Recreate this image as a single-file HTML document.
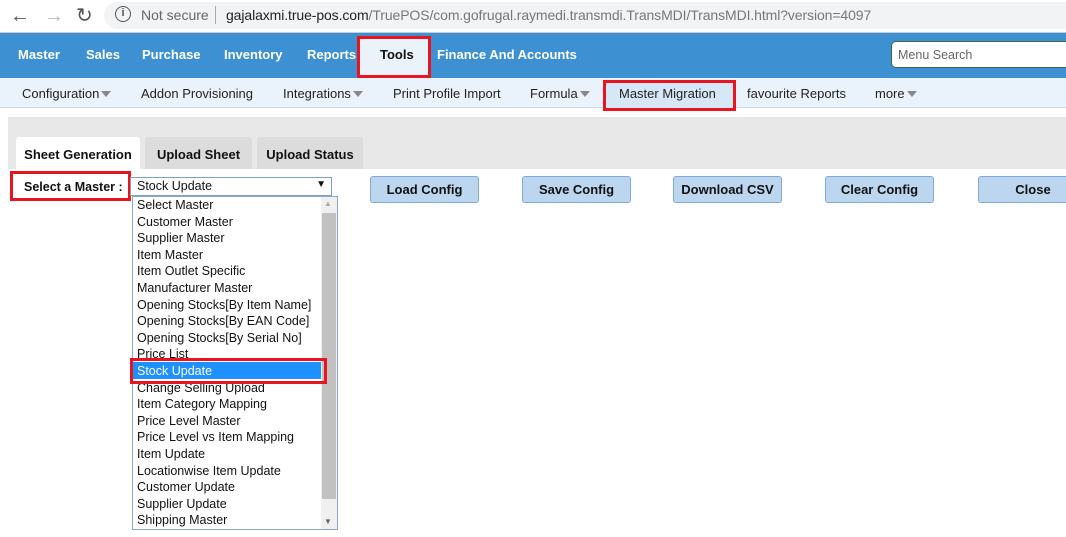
<!DOCTYPE html>
<html><head><style>
*{margin:0;padding:0;box-sizing:border-box}
body{width:1066px;height:537px;overflow:hidden;background:#fff;font-family:"Liberation Sans",Arial,sans-serif;position:relative}
.a{position:absolute}
.nav span{position:absolute;top:47px;color:#fff;font-weight:bold;font-size:13px}
.sub span{position:absolute;top:86px;color:#222;font-size:13px}
.tri{display:inline-block;width:0;height:0;border-left:5px solid transparent;border-right:5px solid transparent;border-top:6px solid #888;margin-left:2px;vertical-align:1px}
.btn{position:absolute;top:176px;height:27px;background:#bcd6ef;border:1px solid #7eaad8;border-radius:3px;font-weight:bold;font-size:13px;color:#111;text-align:center;line-height:25px}
.tab{position:absolute;top:137px;height:32px;font-weight:bold;font-size:13px;color:#111;text-align:center;line-height:36px;border-radius:3px 3px 0 0}
.li{position:absolute;left:137px;font-size:12.5px;color:#111;line-height:16px}
</style></head><body>
<div class="a" style="left:0;top:0;width:1066px;height:33px;background:#fff"></div>
<div class="a" style="left:10px;top:5px;font-size:20px;color:#555">&#8592;</div>
<div class="a" style="left:44px;top:5px;font-size:20px;color:#bbb">&#8594;</div>
<div class="a" style="left:76px;top:3px;font-size:20px;color:#555">&#8635;</div>
<div class="a" style="left:104px;top:2px;width:980px;height:27px;border-radius:14px;background:#f1f3f4"></div>
<div class="a" style="left:115px;top:6px;width:16px;height:16px;border:1.5px solid #555;border-radius:50%;font-size:11px;text-align:center;line-height:13px;color:#555;font-weight:bold">i</div>
<div class="a" style="left:141px;top:7px;font-size:14px;color:#666">Not secure</div>
<div class="a" style="left:215px;top:6px;width:1px;height:18px;background:#aaa"></div>
<div class="a" style="left:226px;top:7px;font-size:14px;color:#222;letter-spacing:-0.1px">gajalaxmi.true-pos.com<span style="color:#777">/TruePOS/com.gofrugal.raymedi.transmdi.TransMDI/TransMDI.html?version=4097</span></div>
<div class="a" style="left:0;top:32px;width:1066px;height:1px;background:#ccc"></div>
<div class="a" style="left:0;top:33px;width:1066px;height:45px;background:#3d91d2"></div>
<div class="a" style="left:357px;top:36px;width:74px;height:42px;background:#eaf2fa;border:3px solid #e8141f"></div>
<div class="nav">
<span style="left:18px">Master</span><span style="left:86px">Sales</span><span style="left:142px">Purchase</span><span style="left:224px">Inventory</span><span style="left:307px">Reports</span><span style="left:380px;color:#111">Tools</span><span style="left:437px">Finance And Accounts</span>
</div>
<div class="a" style="left:891px;top:41px;width:190px;height:27px;background:#fff;border:1px solid #3a6a3a;border-radius:5px;font-size:12.5px;color:#666;padding:6px 0 0 6px">Menu Search</div>
<div class="a" style="left:0;top:78px;width:1066px;height:30px;background:#eaf3fb;border-bottom:1px solid #c8dbe8"></div>
<div class="a" style="left:603px;top:80px;width:133px;height:31px;background:#d6e8f7;border:3px solid #e8141f"></div>
<div class="sub">
<span style="left:22px">Configuration<i class="tri"></i></span><span style="left:141px">Addon Provisioning</span><span style="left:283px">Integrations<i class="tri"></i></span><span style="left:393px">Print Profile Import</span><span style="left:530px">Formula<i class="tri"></i></span><span style="left:619px">Master Migration</span><span style="left:747px">favourite Reports</span><span style="left:875px">more<i class="tri"></i></span>
</div>
<div class="a" style="left:8px;top:117px;width:1058px;height:52px;background:#e8e8e8"></div>
<div class="tab" style="left:16px;width:124px;background:#fff">Sheet Generation</div>
<div class="tab" style="left:145px;width:107px;background:#dcdcdc">Upload Sheet</div>
<div class="tab" style="left:257px;width:106px;background:#dcdcdc">Upload Status</div>
<div class="a" style="left:10px;top:171px;width:121px;height:30px;border:3px solid #e8141f;font-weight:bold;font-size:12.5px;color:#111;padding:6px 0 0 11px">Select a Master :</div>
<div class="a" style="left:130px;top:177px;width:202px;height:19px;border:1px solid #7ea1c8;font-size:12.5px;padding:1px 0 0 6px;color:#111">Stock Update<span style="position:absolute;right:5px;top:1px;font-size:10px">&#9660;</span></div>
<div class="btn" style="left:370px;width:109px">Load Config</div>
<div class="btn" style="left:522px;width:109px">Save Config</div>
<div class="btn" style="left:673px;width:109px">Download CSV</div>
<div class="btn" style="left:825px;width:109px">Clear Config</div>
<div class="btn" style="left:978px;width:110px">Close</div>
<div class="a" style="left:132px;top:196px;width:206px;height:334px;border:1px solid #8aa8cc;background:#fff"></div>
<div class="a" style="left:321px;top:197px;width:16px;height:332px;background:#f0f0f0"></div>
<div class="a" style="left:322px;top:213px;width:14px;height:286px;background:#c1c1c1"></div>
<div class="a" style="left:324px;top:199px;font-size:8px;color:#aaa">&#9650;</div>
<div class="a" style="left:324px;top:517px;font-size:8px;color:#666">&#9660;</div>
<div class="a" style="left:133px;top:362px;width:188px;height:17px;background:#1e90ff"></div>
<div class="a" style="left:130px;top:358px;width:197px;height:26px;border:3px solid #e8141f"></div>
<div class="li" style="top:197px">Select Master</div>
<div class="li" style="top:214px">Customer Master</div>
<div class="li" style="top:230px">Supplier Master</div>
<div class="li" style="top:247px">Item Master</div>
<div class="li" style="top:263px">Item Outlet Specific</div>
<div class="li" style="top:280px">Manufacturer Master</div>
<div class="li" style="top:297px">Opening Stocks[By Item Name]</div>
<div class="li" style="top:313px">Opening Stocks[By EAN Code]</div>
<div class="li" style="top:330px">Opening Stocks[By Serial No]</div>
<div class="li" style="top:346px">Price List</div>
<div class="li" style="top:363px;color:#fff">Stock Update</div>
<div class="li" style="top:380px;clip-path:inset(4px 0 0 0)">Change Selling Upload</div>
<div class="li" style="top:396px">Item Category Mapping</div>
<div class="li" style="top:413px">Price Level Master</div>
<div class="li" style="top:429px">Price Level vs Item Mapping</div>
<div class="li" style="top:446px">Item Update</div>
<div class="li" style="top:463px">Locationwise Item Update</div>
<div class="li" style="top:479px">Customer Update</div>
<div class="li" style="top:496px">Supplier Update</div>
<div class="li" style="top:512px">Shipping Master</div>
</body></html>
